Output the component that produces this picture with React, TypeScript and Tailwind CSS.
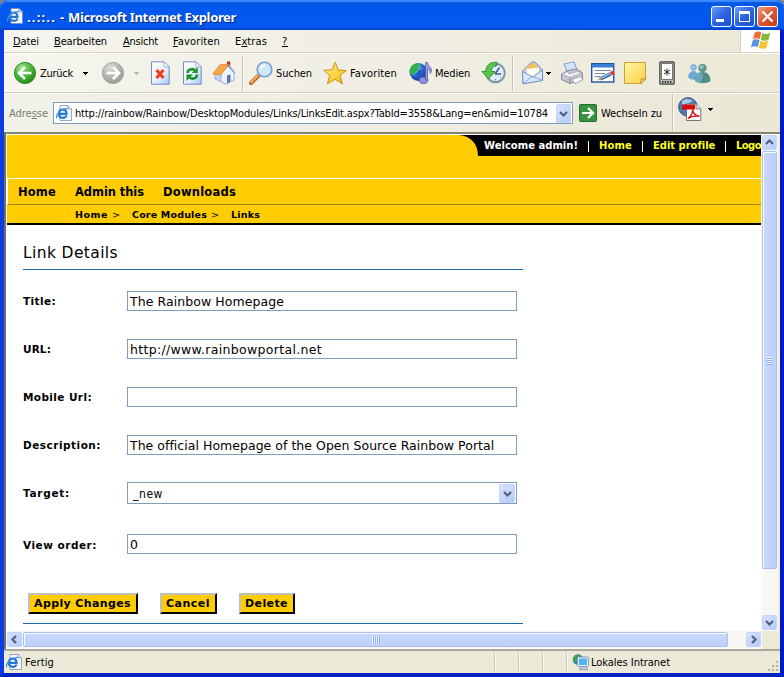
import { useLayoutEffect, useRef, type ReactNode } from "react";

const tahoma = "font-['DejaVu_Sans_Condensed','DejaVu_Sans',sans-serif]";
const verdana = "font-['DejaVu_Sans',sans-serif]";

/* Spreads its text over the width of its own box by adjusting the tracking. */
function Fit({ className = "", children }: { className?: string; children: ReactNode }) {
  const box = useRef<HTMLSpanElement>(null);
  const text = useRef<HTMLSpanElement>(null);
  useLayoutEffect(() => {
    const b = box.current;
    const t = text.current;
    if (!b || !t) return;
    t.style.letterSpacing = "0px";
    const n = (t.textContent || "").length;
    const natural = t.getBoundingClientRect().width;
    t.style.letterSpacing = `${(b.getBoundingClientRect().width - natural) / n}px`;
  }, []);
  return (
    <span ref={box} className={`block shrink-0 whitespace-nowrap ${className}`}>
      <span ref={text} className="inline-block whitespace-pre">{children}</span>
    </span>
  );
}

function Caret({ className = "", fill = "#000" }: { className?: string; fill?: string }) {
  return (
    <svg className={`shrink-0 ${className}`} width="5" height="3" viewBox="0 0 5 3" shapeRendering="crispEdges">
      <path d="M0 0H5V1H4V2H3V3H2V2H1V1H0Z" fill={fill} />
    </svg>
  );
}

function Ball({ green, className = "" }: { green?: boolean; className?: string }) {
  const id = green ? "ballGreen" : "ballGrey";
  return (
    <svg className={`shrink-0 ${className}`} width="24" height="24" viewBox="0 0 24 24">
      <defs>
        <radialGradient id={id} cx="0.35" cy="0.25" r="0.8">
          <stop offset="0" stopColor={green ? "#a4e291" : "#dcdcd8"} />
          <stop offset="0.5" stopColor={green ? "#4cb840" : "#b8b8b6"} />
          <stop offset="1" stopColor={green ? "#248a1b" : "#969693"} />
        </radialGradient>
      </defs>
      <circle cx="12" cy="12" r="10.6" fill={`url(#${id})`} stroke={green ? "#328c2b" : "#a3a3a0"} />
      <path
        d={green ? "M18.5 12H7M12 6L6 12L12 18" : "M5.5 12H17M12 6L18 12L12 18"}
        fill="none" stroke="#fff" strokeWidth="2.6"
      />
    </svg>
  );
}

function PageShape() {
  return (
    <>
      <path d="M1.5 0.8H14L19.2 6V23.2H1.5Z" fill="url(#pageFill)" stroke="#7889c0" />
      <path d="M14 0.8V6H19.2Z" fill="#fff" stroke="#8da0d5" strokeWidth="0.8" />
    </>
  );
}

function StopIcon({ className = "" }) {
  return (
    <svg className={`shrink-0 ${className}`} width="20" height="24" viewBox="0 0 20 24">
      <defs>
        <linearGradient id="pageFill" x1="0" y1="0" x2="1" y2="1">
          <stop offset="0" stopColor="#ffffff" />
          <stop offset="0.55" stopColor="#eaf1ff" />
          <stop offset="1" stopColor="#a7c4f8" />
        </linearGradient>
      </defs>
      <PageShape />
      <path d="M6.500 9L13.500 17M13.500 9L6.500 17" stroke="#ef3e1e" strokeWidth="3.200" />
    </svg>
  );
}

function RefreshIcon({ className = "" }) {
  return (
    <svg className={`shrink-0 ${className}`} width="20" height="24" viewBox="0 0 20 24">
      <PageShape />
      <path d="M5.5 12C5.5 8.5 10 7 13 9.2" fill="none" stroke="#20952f" strokeWidth="2.6" />
      <path d="M15.8 6V12H9.6Z" fill="#20952f" />
      <path d="M15 13.5C15 17.5 10.5 18.8 7.5 16.5" fill="none" stroke="#149429" strokeWidth="2.6" />
      <path d="M4.5 20V13.5H11Z" fill="#149429" />
    </svg>
  );
}

function HomeIcon({ className = "" }) {
  return (
    <svg className={`shrink-0 ${className}`} width="24" height="24" viewBox="0 0 24 24">
      <rect x="15" y="0.500" width="3.200" height="7" fill="#b8301a" />
      <path d="M3 12L9 8L14 13V23L3 18Z" fill="#c3d4f6" stroke="#7b90c7" strokeWidth="0.6" />
      <path d="M9 13L16 5L22 12V19L14 23.2L9 20.500Z" fill="#eef4ff" stroke="#8496c8" strokeWidth="0.7" />
      <path d="M0.800 13L8 3.800L16.500 3.600L8.800 13.800Z" fill="#f8a944" stroke="#dc7f27" strokeWidth="0.8" />
      <path d="M16.300 3.800L23 12.400" stroke="#8ca3d8" strokeWidth="1.500" />
      <path d="M15 14.500L18.500 13.500V20.500L15 22.400Z" fill="#5774b3" />
    </svg>
  );
}

function SearchIcon({ className = "" }) {
  return (
    <svg className={`shrink-0 ${className}`} width="24" height="24" viewBox="0 0 24 24">
      <path d="M2 22L9.5 14.5" stroke="#b8692f" strokeWidth="4.2" strokeLinecap="round" />
      <path d="M2 21.3L9 14.2" stroke="#f3ac68" strokeWidth="2" strokeLinecap="round" />
      <circle cx="15.5" cy="8.5" r="7.3" fill="#cfe9fd" stroke="#7a9edb" strokeWidth="1.6" />
      <path d="M10.5 8C11 4.5 14 3 17 3.6C15 6 13 8 10.5 8Z" fill="#fff" />
    </svg>
  );
}

function StarIcon({ className = "" }) {
  return (
    <svg className={`shrink-0 ${className}`} width="24" height="24" viewBox="0 0 24 24">
      <defs>
        <linearGradient id="star" x1="0" y1="0" x2="1" y2="1">
          <stop offset="0" stopColor="#fff6a4" />
          <stop offset="0.6" stopColor="#fbcf37" />
          <stop offset="1" stopColor="#eda41b" />
        </linearGradient>
      </defs>
      <path d="M12.3 1L15.2 9L23.3 9.6L17 14.6L19.6 23L12 18.3L4.4 22.8L6.7 14.6L0.8 9.3L9.2 8.8Z" fill="url(#star)" stroke="#d09019" strokeLinejoin="round" />
    </svg>
  );
}

function MediaIcon({ className = "" }) {
  return (
    <svg className={`shrink-0 ${className}`} width="24" height="24" viewBox="0 0 24 24">
      <defs>
        <radialGradient id="globe" cx="0.35" cy="0.3" r="0.75">
          <stop offset="0" stopColor="#9ad6ff" />
          <stop offset="0.5" stopColor="#2f6bd6" />
          <stop offset="1" stopColor="#15318f" />
        </radialGradient>
      </defs>
      <circle cx="9.500" cy="11" r="9" fill="url(#globe)" />
      <path d="M2 6C4.500 2 9 1.500 11.500 3.500L9 6L10 9L6 11L4.500 15L1 12C0.300 9 0.800 8 2 6Z" fill="#2fb04a" />
      <path d="M10 9L15 10L13 14L9 16L7 13Z" fill="#2456c4" />
      <ellipse cx="14.500" cy="19.300" rx="4.300" ry="3.200" fill="#8d93de" stroke="#454c9d" strokeWidth="0.800" />
      <path d="M16.500 19V1.500H18.500C19 5.500 22.500 6 22.500 9C22.500 11 21.500 12 21 12.500C21.500 10 20 8.500 18.500 8V19.500Z" fill="#9a9fe2" stroke="#4a51a2" strokeWidth="0.700" />
    </svg>
  );
}

function HistoryIcon({ className = "" }) {
  return (
    <svg className={`shrink-0 ${className}`} width="26" height="24" viewBox="0 0 26 24">
      <circle cx="14.500" cy="12" r="9.300" fill="#e3f0fc" stroke="#8493ac" strokeWidth="2" />
      <path d="M14 13L18.500 6.500M14 13H20" stroke="#425b8f" strokeWidth="1.500" />
      <path d="M14.500 4.500V6M14.500 18V19.500M20 17L19 16" stroke="#6984b2" />
      <path d="M16 1.300C9 0.600 5 4.500 4.800 10.500H1L7.500 18L14 10.500H10.300C10.500 7 12.500 4.500 16 4.500Z" fill="#5cc552" stroke="#238d25" strokeWidth="0.900" />
    </svg>
  );
}

function MailIcon({ className = "" }) {
  return (
    <svg className={`shrink-0 ${className}`} width="24" height="24" viewBox="0 0 24 24">
      <path d="M1.500 10L10 1.500C12 0.500 14 1 15 2L21.500 9V19L2 22.500Z" fill="#b9d1f6" stroke="#7591cf" />
      <path d="M4 8L10 2.500C12 1.500 13 2 14 3L19 8L17 13L6 14Z" fill="#f7bd5c" />
      <path d="M5.500 8L18 6.500V13L12 16L6 14Z" fill="#fffef8" />
      <path d="M1.500 10.500L11.500 16L21.500 9V19.500L2 22.800Z" fill="#dceaff" stroke="#718dca" />
      <path d="M2 22.500L11 15.500L21 19" fill="none" stroke="#88a4dc" />
    </svg>
  );
}

function PrinterIcon({ className = "" }) {
  return (
    <svg className={`shrink-0 ${className}`} width="24" height="24" viewBox="0 0 24 24">
      <path d="M4 3L14 0.800L17.500 10L8 13Z" fill="#cfe5ff" stroke="#829fca" />
      <path d="M1.500 13L8 9.500L17 8L22.500 12V18L10 22.500L1.500 18.500Z" fill="#c4c6d3" stroke="#868896" />
      <path d="M1.500 13L8 10.500L9 13L17 10.500L22 12L10 16.500Z" fill="#f0f1f7" stroke="#9294a3" strokeWidth="0.600" />
      <path d="M10 16.500V22.300" stroke="#787b8d" />
      <path d="M12 18.500L20 15.500L23 18.500L15 22.800Z" fill="#fff" stroke="#8b8d9b" strokeWidth="0.800" />
    </svg>
  );
}

function EditIcon({ className = "" }) {
  return (
    <svg className={`shrink-0 ${className}`} width="24" height="20" viewBox="0 0 24 20">
      <rect x="0.700" y="0.700" width="22" height="18.300" fill="#fff" stroke="#24549d" strokeWidth="1.400" />
      <rect x="1" y="1" width="21.500" height="3.500" fill="#3c7dd7" />
      <path d="M3.500 7.500H20M3.500 10.500H14M3.500 13.500H9" stroke="#7a8ca7" strokeWidth="1.200" />
      <path d="M9 15.800L19.500 11" stroke="#385f9f" strokeWidth="3.600" />
      <path d="M9.500 15.200L19 10.800" stroke="#8fc0ee" strokeWidth="1.600" />
      <circle cx="21.300" cy="10" r="2.100" fill="#d33c2d" />
      <path d="M6 17.300L8.500 14.200L10.200 17Z" fill="#edae55" />
    </svg>
  );
}

function NoteIcon({ className = "" }) {
  return (
    <svg className={`shrink-0 ${className}`} width="22" height="22" viewBox="0 0 22 22">
      <defs>
        <linearGradient id="note" x1="0" y1="0" x2="1" y2="1">
          <stop offset="0" stopColor="#fff5a6" />
          <stop offset="1" stopColor="#fbd046" />
        </linearGradient>
      </defs>
      <path d="M0.500 0.500H21.500V17L17 21.500H0.500Z" fill="url(#note)" stroke="#cfa02c" />
      <path d="M21.500 17H17V21.500Z" fill="#fff0a0" stroke="#b9841a" />
    </svg>
  );
}

function PdaIcon({ className = "" }) {
  return (
    <svg className={`shrink-0 ${className}`} width="16" height="24" viewBox="0 0 16 24">
      <rect x="0.800" y="0.800" width="14.400" height="22.400" rx="1" fill="#bdbdb9" stroke="#454545" strokeWidth="1.200" />
      <rect x="2.500" y="2.500" width="11" height="16" fill="#fff" stroke="#777" />
      <path d="M8 7.500V14.500M5 9L11 13M11 9L5 13" stroke="#222" strokeWidth="1" />
      <path d="M3 21H13" stroke="#3c3c3c" strokeWidth="2" strokeDasharray="1.500 1.200" />
    </svg>
  );
}

function PeopleIcon({ className = "" }) {
  return (
    <svg className={`shrink-0 ${className}`} width="24" height="21" viewBox="0 0 24 21">
      <path d="M1 14C1.500 10 4 7.500 8 8L12 12L9 17C5 17 2 16 1 14Z" fill="#6da8d7" />
      <circle cx="6.500" cy="4.300" r="2.800" fill="#8cc3ee" stroke="#508fc1" strokeWidth="0.600" />
      <path d="M8 18C8 12 11 9 16 9C21 9 23.500 13 23.500 18C19 21 12 21 8 18Z" fill="#528e83" />
      <path d="M8 18C8 12 11 9 14 9L16 14L13 20Z" fill="#6aa8bd" />
      <circle cx="15.500" cy="5" r="4.300" fill="#5c998b" />
      <circle cx="14.500" cy="4" r="2" fill="#94c7b5" />
    </svg>
  );
}

function IePage({ size, className = "" }: { size: number; className?: string }) {
  return (
    <svg className={`shrink-0 ${className}`} width={size} height={size} viewBox="0 0 16 16">
      <path d="M4 0.500H12L15.500 4V15.500H4Z" fill="#f7fbff" stroke="#7590bd" strokeWidth="0.800" />
      <path d="M12 0.500V4H15.500" fill="#cfdff6" stroke="#7590bd" strokeWidth="0.700" />
      <path d="M3 8.800H10.500C10.500 5.600 8.900 4.600 6.900 4.600C4.500 4.600 2.900 6.400 2.900 8.800C2.900 11.300 4.500 12.800 6.900 12.800C8.800 12.800 10.100 11.900 10.500 10.500" fill="none" stroke="#2479cf" strokeWidth="2.200" />
      <path d="M0.800 13.300C-0.500 10 4 3.800 12 3.300" fill="none" stroke="#3f93e2" strokeWidth="1.200" />
    </svg>
  );
}

function PdfIcon({ className = "" }) {
  return (
    <svg className={`shrink-0 ${className}`} width="25" height="25" viewBox="0 0 25 25">
      <circle cx="10" cy="10" r="9.300" fill="#4c79b1" stroke="#2c5183" />
      <path d="M4 4C8 1 12 2 15 4L11 6L4 8Z" fill="#a9c9e6" />
      <path d="M8.500 7H18L22.800 12V23.500H8.500Z" fill="#fff" stroke="#777" />
      <path d="M18 7V12H22.800" fill="#ddd" stroke="#777" strokeWidth="0.800" />
      <rect x="4" y="7.500" width="13" height="5" fill="#d60d10" />
      <path d="M10 21.500C13 19 15 16 14.500 12.500C15.500 17 18 19 21.500 19.200C17 18.500 13 19.500 10 21.500Z" fill="none" stroke="#d61a1c" strokeWidth="1.400" />
    </svg>
  );
}

function WindowsFlag() {
  return (
    <svg width="20" height="19" viewBox="0 0 20 19">
      <path d="M3.500 2C6 0 8 0.300 10.300 1.500L8.700 8.300C6.500 7 4.500 7 2 8.500Z" fill="#ee6b36" />
      <path d="M11.300 2C14 3.500 16.500 3.300 19.300 1.800L17.500 8.800C15 10.300 12.500 10 9.800 8.700Z" fill="#86b93c" />
      <path d="M1.700 9.500C4 8 6.500 8 8.500 9.300L6.800 16.300C4.500 15 2.500 15 0 16.500Z" fill="#5b92dc" />
      <path d="M9.500 9.800C12 11.200 14.500 11.300 17.200 9.800L15.500 16.800C13 18.300 10.500 18 7.800 16.800Z" fill="#f4c332" />
    </svg>
  );
}

function NetIcon() {
  return (
    <svg className="shrink-0" width="18" height="17" viewBox="0 0 18 17">
      <circle cx="6" cy="5.500" r="5.300" fill="#3d7cc4" />
      <path d="M2 2C5 0 8 0.500 9 2L6 6L4 9L1 7Z" fill="#3da548" />
      <rect x="5.500" y="3" width="11" height="9.500" rx="1" fill="#e5eefc" stroke="#8798bf" />
      <rect x="7" y="4.500" width="8" height="6.500" fill="#4fb4f5" />
      <path d="M9 12.500H14L16 15.800H7.500Z" fill="#bdcae4" stroke="#8494b8" strokeWidth="0.700" />
    </svg>
  );
}

type Dir = "up" | "down" | "left" | "right";
const chevrons: Record<Dir, string> = {
  up: "M1 6L4.500 2.500L8 6",
  down: "M1 3L4.500 6.500L8 3",
  left: "M6 1L2.500 4.500L6 8",
  right: "M3 1L6.500 4.500L3 8",
};

function ArrowButton({ dir, className = "" }: { dir: Dir; className?: string }) {
  return (
    <div className={`flex shrink-0 items-center justify-center rounded-[2px] border border-[#c3d3fa] bg-linear-to-br from-[#d6e2ff] to-[#b5cbf9] ${className}`}>
      <svg width="9" height="9" viewBox="0 0 9 9">
        <path d={chevrons[dir]} fill="none" stroke="#4d6185" strokeWidth="2.200" />
      </svg>
    </div>
  );
}

function Sep({ className = "" }) {
  return <div className={`w-[2px] shrink-0 border-l border-[#c9c5b2] bg-[#fbfaf5] ${className}`} />;
}

function TitleBar() {
  return (
    <div className="flex h-[30px] shrink-0 items-start rounded-t-[7px] bg-linear-to-b from-[#0a56d8] via-[#0058ee] via-25% to-[#0558f0] pl-[7px] shadow-[inset_0_2px_1px_#3d8bff,inset_0_-2px_1px_#0146cf]">
      <IePage size={16} className="mt-[8px]" />
      <div className="mt-[8px] ml-[4px] flex w-[209px] shrink-0 font-['Noto_Sans',sans-serif] text-[13px] leading-[18px] font-bold text-white [text-shadow:1px_1px_1px_#07287e]">
        <Fit className="w-[29px]">..::..</Fit>
        <Fit className="ml-[4px] w-[5px]">-</Fit>
        <Fit className="ml-[3px] w-[168px]">Microsoft Internet Explorer</Fit>
      </div>
      <div className="mt-[6px] ml-[475px] flex gap-[2px]">
        <div className="h-[21px] w-[21px] rounded-[3px] border border-white bg-linear-to-br from-[#6d9bfa] via-[#2c62e2] to-[#1c50d0] pt-[12px] pl-[4px]">
          <div className="h-[3px] w-[8px] bg-white" />
        </div>
        <div className="h-[21px] w-[21px] rounded-[3px] border border-white bg-linear-to-br from-[#6d9bfa] via-[#2c62e2] to-[#1c50d0] pt-[4px] pl-[4px]">
          <div className="h-[11px] w-[11px] border border-t-[3px] border-white" />
        </div>
        <div className="flex h-[21px] w-[21px] items-center justify-center rounded-[3px] border border-white bg-linear-to-br from-[#f0997c] via-[#e05531] to-[#c43a15]">
          <svg width="13" height="13" viewBox="0 0 13 13">
            <path d="M1.500 1.500L11.500 11.500M11.500 1.500L1.500 11.500" stroke="#fff" strokeWidth="2.200" />
          </svg>
        </div>
      </div>
    </div>
  );
}

function MenuBar() {
  return (
    <div className="flex h-[23px] shrink-0 border-b border-[#d8d2bd] bg-linear-to-r from-[#f5f4ee] to-[#ece9d8]">
      <div className="flex w-[736px] pt-[4px] pl-[9px] text-[11px] leading-[15px] text-black">
        <Fit className="w-[26px]"><u>D</u>atei</Fit>
        <Fit className="ml-[15px] w-[53px]"><u>B</u>earbeiten</Fit>
        <Fit className="ml-[16px] w-[35px]"><u>A</u>nsicht</Fit>
        <Fit className="ml-[15px] w-[47px]"><u>F</u>avoriten</Fit>
        <Fit className="ml-[15px] w-[32px]">E<u>x</u>tras</Fit>
        <Fit className="ml-[15px] w-[6px]"><u>?</u></Fit>
      </div>
      <div className="flex w-[40px] justify-center border-l border-[#d8d2bd] bg-white pt-[1px]">
        <WindowsFlag />
      </div>
    </div>
  );
}

function ToolBar() {
  return (
    <div className="flex h-[40px] shrink-0 items-center border-t border-b border-t-white border-b-[#d3cebb] bg-linear-to-r from-[#f5f4ee] to-[#ece9d8] pl-[9px] text-[11px] leading-[15px]">
      <Ball green />
      <Fit className="ml-[3px] w-[33px]">Zurück</Fit>
      <Caret className="ml-[10px]" />
      <Ball className="ml-[13px]" />
      <Caret className="ml-[9px]" fill="#b9b7aa" />
      <StopIcon className="ml-[11px]" />
      <RefreshIcon className="ml-[12px]" />
      <HomeIcon className="ml-[10px]" />
      <Sep className="ml-[6px] h-[35px]" />
      <SearchIcon className="ml-[5px]" />
      <Fit className="ml-[3px] w-[36px]">Suchen</Fit>
      <StarIcon className="ml-[11px]" />
      <Fit className="ml-[3px] w-[47px]">Favoriten</Fit>
      <MediaIcon className="ml-[12px]" />
      <Fit className="ml-[2px] w-[35px]">Medien</Fit>
      <HistoryIcon className="ml-[11px]" />
      <Sep className="ml-[5px] h-[35px]" />
      <MailIcon className="ml-[7px]" />
      <Caret className="ml-[1px]" />
      <PrinterIcon className="ml-[9px]" />
      <EditIcon className="ml-[7px]" />
      <NoteIcon className="ml-[9px]" />
      <PdaIcon className="ml-[13px]" />
      <PeopleIcon className="ml-[12px]" />
    </div>
  );
}

function AddressBar() {
  return (
    <div className="flex h-[39px] shrink-0 items-start border-t border-white bg-linear-to-r from-[#f2f1e9] to-[#ebe8d7] pl-[5px] text-[11px] leading-[15px]">
      <Fit className="mt-[12px] w-[39px] text-[#7d7b70]">Adre<u>s</u>se</Fit>
      <div className="mt-[8px] ml-[5px] flex h-[22px] w-[520px] items-center border border-[#7f9db9] bg-white pl-[2px]">
        <IePage size={16} />
        <Fit className="ml-[3px] w-[473px]">http://rainbow/Rainbow/DesktopModules/Links/LinksEdit.aspx?TabId=3558&amp;Lang=en&amp;mid=10784</Fit>
        <ArrowButton dir="down" className="ml-[8px] h-[19px] w-[15px]" />
      </div>
      <svg className="mt-[10px] ml-[6px] shrink-0" width="18" height="18" viewBox="0 0 18 18">
        <rect x="0.500" y="0.500" width="17" height="17" rx="1" fill="#379340" stroke="#216e2b" />
        <path d="M3 9H14M9 4L14 9L9 14" fill="none" stroke="#fff" strokeWidth="2.200" />
      </svg>
      <Fit className="mt-[12px] ml-[4px] w-[61px]">Wechseln zu</Fit>
      <Sep className="ml-[10px] h-[37px]" />
      <PdfIcon className="mt-[3px] ml-[4px]" />
      <Caret className="mt-[14px] ml-[5px]" />
    </div>
  );
}

function PortalHeader() {
  return (
    <div className={`shrink-0 bg-[#ffcc00] text-black ${verdana}`}>
      <div className="flex h-[43px] items-start justify-end overflow-hidden">
        <svg className="shrink-0" width="20" height="21" viewBox="0 0 20 21">
          <path d="M0 0H20V21H19C19 9 12 1 0 0Z" fill="#000" />
        </svg>
        <div className="flex h-[21px] w-[282px] items-start overflow-hidden bg-black pt-[3px] pl-[5px] text-[10px] leading-[15px] font-bold text-[#ffff22]">
          <Fit className="w-[94px] text-white">Welcome admin!</Fit>
          <div className="mt-[3px] ml-[10px] h-[11px] w-px shrink-0 bg-white" />
          <Fit className="ml-[10px] w-[33px]">Home</Fit>
          <div className="mt-[3px] ml-[10px] h-[11px] w-px shrink-0 bg-white" />
          <Fit className="ml-[10px] w-[62px]">Edit profile</Fit>
          <div className="mt-[3px] ml-[10px] h-[11px] w-px shrink-0 bg-white" />
          <Fit className="ml-[10px] w-[25px]">Logo</Fit>
        </div>
      </div>
      <div className="flex h-[27px] border-y border-l border-y-white border-b-[#a08218] border-l-white pt-[4px] pl-[10px] text-[11.500px] leading-[18px] font-bold">
        <Fit className="w-[38px]">Home</Fit>
        <Fit className="ml-[19px] w-[69px]">Admin this</Fit>
        <Fit className="ml-[19px] w-[73px]">Downloads</Fit>
      </div>
      <div className="flex h-[20px] border-b-2 border-black pt-[2px] pl-[68px] text-[9.500px] leading-[15px] font-bold">
        <Fit className="w-[33px]">Home</Fit>
        <Fit className="ml-[4px] w-[8px] font-normal">&gt;</Fit>
        <Fit className="ml-[12px] w-[75px]">Core Modules</Fit>
        <Fit className="ml-[4px] w-[8px] font-normal">&gt;</Fit>
        <Fit className="ml-[12px] w-[29px]">Links</Fit>
      </div>
    </div>
  );
}

function Field({ label, labelClass, rowClass, children }: { label: string; labelClass: string; rowClass: string; children?: ReactNode }) {
  return (
    <div className={`flex items-start ${rowClass}`}>
      <div className="w-[104px] shrink-0 pt-[3px] text-[10.500px] leading-[15px] font-bold">
        <Fit className={labelClass}>{label}</Fit>
      </div>
      {children}
    </div>
  );
}

function TextBox({ children }: { children?: ReactNode }) {
  return <div className="h-[20px] w-[390px] border border-[#7f9db9] bg-white pl-[2px] text-[12.500px] leading-[19px]">{children}</div>;
}

function PortalButton({ className, children }: { className: string; children: ReactNode }) {
  return (
    <div className="h-[21px] border-2 border-t-[#c0c0c0] border-r-black border-b-black border-l-[#c0c0c0] bg-[#ffcc00] pr-[5px] pl-[4px] text-[11px] leading-[18px] font-bold">
      <Fit className={className}>{children}</Fit>
    </div>
  );
}

function LinkForm() {
  return (
    <div className={`w-[516px] pl-[16px] text-black ${verdana}`}>
      <div className="h-[44px] w-[500px] pt-[18px] text-[15.500px] leading-[20px]">
        <Fit className="w-[95px]">Link Details</Fit>
      </div>
      <div className="h-px w-[500px] bg-[#1c69ae]" />
      <Field label="Title:" labelClass="w-[33px]" rowClass="mt-[21px] h-[48px]">
        <TextBox><Fit className="w-[154px]">The Rainbow Homepage</Fit></TextBox>
      </Field>
      <Field label="URL:" labelClass="w-[28px]" rowClass="h-[48px]">
        <TextBox><Fit className="w-[192px]">http://www.rainbowportal.net</Fit></TextBox>
      </Field>
      <Field label="Mobile Url:" labelClass="w-[69px]" rowClass="h-[48px]">
        <TextBox />
      </Field>
      <Field label="Description:" labelClass="w-[78px]" rowClass="h-[47px]">
        <TextBox><Fit className="w-[364px]">The official Homepage of the Open Source Rainbow Portal</Fit></TextBox>
      </Field>
      <Field label="Target:" labelClass="mt-px w-[47px]" rowClass="h-[52px]">
        <div className="flex h-[22px] w-[390px] items-center justify-between border border-[#7f9db9] bg-white pr-[1px] pl-[5px] font-['DejaVu_Sans_Condensed','DejaVu_Sans',sans-serif] text-[12px]">
          <Fit className="mt-px w-[30px]">_new</Fit>
          <ArrowButton dir="down" className="h-[19px] w-[16px]" />
        </div>
      </Field>
      <Field label="View order:" labelClass="mt-px w-[74px]" rowClass="h-[59px]">
        <TextBox><Fit className="w-[8px]">0</Fit></TextBox>
      </Field>
      <div className="flex h-[30px] w-[500px] items-start pl-[5px]">
        <PortalButton className="w-[97px]">Apply Changes</PortalButton>
        <div className="w-[22px]" />
        <PortalButton className="w-[44px]">Cancel</PortalButton>
        <div className="w-[22px]" />
        <PortalButton className="w-[43px]">Delete</PortalButton>
      </div>
      <div className="h-px w-[500px] bg-[#1c69ae]" />
    </div>
  );
}

function ScrollV() {
  return (
    <div className="flex w-[17px] shrink-0 flex-col bg-[#f8f7f3] pl-px">
      <ArrowButton dir="up" className="h-[15px] w-[15px]" />
      <div className="mt-px flex h-[418px] w-[15px] flex-col items-center justify-center gap-px rounded-[2px] border border-[#a9bff0] bg-linear-to-r from-[#c9d8fd] to-[#bdd0fb] shadow-[inset_1px_1px_0_#fff]">
        {[0, 1, 2, 3].map((i) => (
          <div key={i} className="h-px w-[7px] bg-[#eef4fe] shadow-[0_1px_0_#8cb0f8]" />
        ))}
      </div>
      <div className="flex-1" />
      <ArrowButton dir="down" className="mb-px h-[15px] w-[15px]" />
    </div>
  );
}

function ScrollH() {
  return (
    <div className="flex h-[17px] w-[755px] shrink-0 bg-[#f8f7f3] pt-px">
      <ArrowButton dir="left" className="h-[15px] w-[15px]" />
      <div className="ml-px flex h-[15px] w-[705px] items-center justify-center gap-px rounded-[2px] border border-[#a9bff0] bg-linear-to-b from-[#c9d8fd] to-[#bdd0fb] shadow-[inset_1px_1px_0_#fff]">
        {[0, 1, 2, 3].map((i) => (
          <div key={i} className="h-[6px] w-px bg-[#eef4fe] shadow-[1px_0_0_#8cb0f8]" />
        ))}
      </div>
      <div className="flex-1" />
      <ArrowButton dir="right" className="mr-px h-[15px] w-[15px]" />
    </div>
  );
}

function StatusBar() {
  return (
    <div className="flex h-[24px] shrink-0 items-center border-t-2 border-[#aca899] bg-[#ece9d8] pl-[2px] text-[11px] leading-[15px]">
      <IePage size={16} />
      <Fit className="mt-px ml-[3px] w-[29px]">Fertig</Fit>
      <Sep className="ml-[440px] h-[18px]" />
      <Sep className="ml-[22px] h-[18px]" />
      <Sep className="ml-[22px] h-[18px]" />
      <Sep className="ml-[22px] h-[18px]" />
      <div className="w-[4px]" />
      <NetIcon />
      <Fit className="mt-px ml-[1px] w-[79px]">Lokales Intranet</Fit>
      <svg className="ml-auto self-end" width="13" height="13" viewBox="0 0 13 13">
        <path d="M9 1h2v2h-2zM5 5h2v2h-2zM9 5h2v2h-2zM1 9h2v2h-2zM5 9h2v2h-2zM9 9h2v2h-2z" fill="#b8b4a2" />
      </svg>
    </div>
  );
}

export default function App() {
  return (
    <div className="h-[677px] w-[784px] bg-[#8d8a7d]">
      <div className={`flex h-[677px] w-[784px] flex-col overflow-hidden rounded-t-[7px] bg-[#0831d9] ${tahoma}`}>
        <TitleBar />
        <div className="flex h-[647px] flex-col border-x-4 border-b-4 border-[#0a3ce0] border-r-[#0019c8] border-b-[#0024bd]">
          <MenuBar />
          <ToolBar />
          <AddressBar />
          <div className="flex h-[517px] shrink-0 flex-col border-t-2 border-l-2 border-t-[#85826f] border-l-[#716f64] bg-white pt-px pl-px">
            <div className="flex h-[496px] shrink-0">
              <div className="w-[754px] shrink-0 overflow-hidden">
                <PortalHeader />
                <LinkForm />
              </div>
              <ScrollV />
              <div className="w-[2px] bg-[#f1efe2]" />
            </div>
            <div className="flex h-[18px] shrink-0">
              <ScrollH />
              <div className="flex-1 bg-[#ece9d8]" />
            </div>
          </div>
          <StatusBar />
        </div>
      </div>
    </div>
  );
}
